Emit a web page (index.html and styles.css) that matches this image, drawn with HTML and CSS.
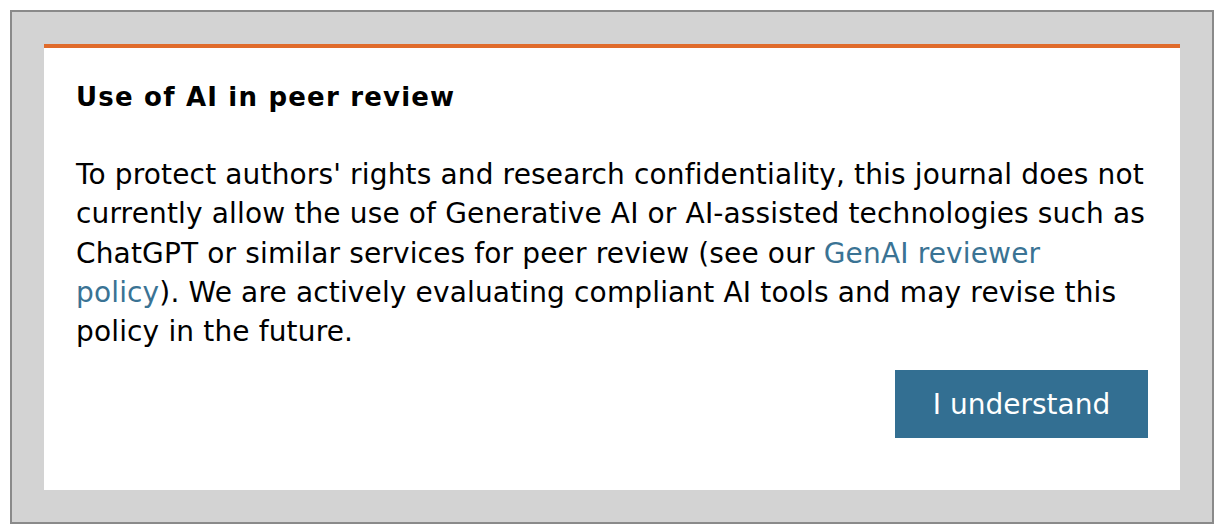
FILE: index.html
```html
<!DOCTYPE html>
<html lang="en">
<head>
<meta charset="utf-8">
<title>Use of AI in peer review</title>
<link rel="stylesheet" href="styles.css">
</head>
<body>
<div class="backdrop">
  <div class="dialog" role="dialog" aria-labelledby="dlg-title">
    <h2 class="dialog-title" id="dlg-title">Use of AI in peer review</h2>
    <p class="dialog-text">To protect authors' rights and research confidentiality, this journal does not currently allow the use of Generative AI or AI-assisted technologies such as ChatGPT or similar services for peer review (see our <a href="#" class="dialog-link">GenAI reviewer policy</a>). We are actively evaluating compliant AI tools and may revise this policy in the future.</p>
    <div class="dialog-actions">
      <button class="btn-primary" type="button">I understand</button>
    </div>
  </div>
</div>
</body>
</html>
```
FILE: styles.css
```css
html, body {
  margin: 0;
  padding: 0;
  background: #ffffff;
}
body {
  padding: 10px 8px 8px 10px;
  font-family: "DejaVu Sans", Verdana, sans-serif;
}
.backdrop {
  width: 1136px;
  background: #d3d3d3;
  border: 2px solid #8a8a8a;
  padding: 32px;
}
.dialog {
  background: #ffffff;
  border-top: 4px solid #e06b2b;
  padding: 32px 32px 52px 32px;
  display: flex;
  flex-direction: column;
}
.dialog-title {
  margin: 0;
  font-size: 26px;
  letter-spacing: 1.2px;
  font-weight: bold;
  color: #000;
  line-height: 34px;
}
.dialog-text {
  margin: 41px 0 0 0;
  font-size: 28px;
  letter-spacing: 0.15px;
  line-height: 39.25px;
  color: #000;
}
.dialog-link {
  color: #3a7394;
  text-decoration: none;
}
.dialog-actions {
  display: flex;
  justify-content: flex-end;
  margin-top: 19px;
}
.btn-primary {
  background: #336f92;
  color: #ffffff;
  border: none;
  border-radius: 0;
  width: 253px;
  height: 68px;
  font-family: "DejaVu Sans", Verdana, sans-serif;
  font-size: 28px;
  padding: 0;
  cursor: pointer;
}
```
